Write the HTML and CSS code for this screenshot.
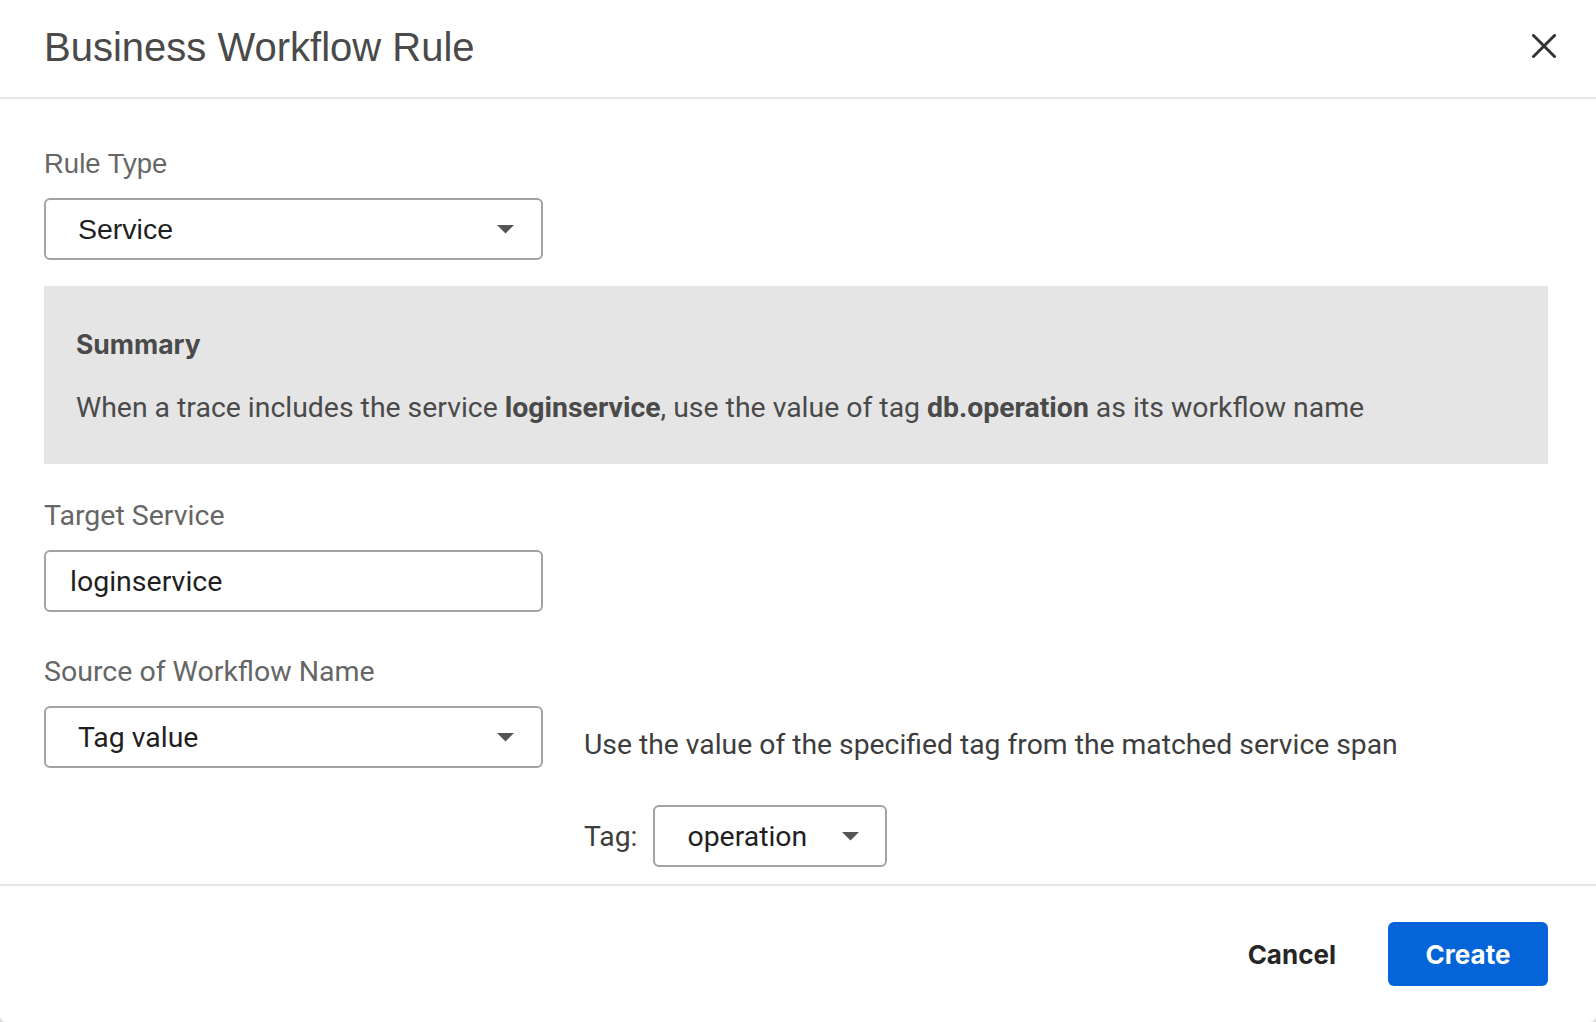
FILE: index.html
```html
<!DOCTYPE html>
<html lang="en">
<head>
<meta charset="utf-8">
<title>Business Workflow Rule</title>
<link rel="stylesheet" href="styles.css">
</head>
<body>
<div class="modal">
  <header class="modal-header">
    <h1 class="modal-title">Business Workflow Rule</h1>
    <button class="close-btn" aria-label="Close">
      <svg width="24" height="24" viewBox="0 0 24 24"><path d="M1.5 1.5 L22.5 22.5 M22.5 1.5 L1.5 22.5" stroke="#333" stroke-width="3" stroke-linecap="round" fill="none"/></svg>
    </button>
  </header>

  <main class="modal-body">
    <div class="field">
      <label class="field-label field-label-alt">Rule Type</label>
      <div class="select select-wide">
        <span class="select-value select-value-alt">Service</span>
        <svg class="caret" width="17" height="9" viewBox="0 0 17 9"><path d="M0 0 H17 L8.5 8.5 Z" fill="#555"/></svg>
      </div>
    </div>

    <section class="summary">
      <h2 class="summary-title">Summary</h2>
      <p class="summary-text">When a trace includes the service <b>loginservice</b>, use the value of tag <b>db.operation</b> as its workflow name</p>
    </section>

    <div class="field field-gap-target">
      <label class="field-label">Target Service</label>
      <div class="input">loginservice</div>
    </div>

    <div class="field field-gap-source">
      <label class="field-label">Source of Workflow Name</label>
      <div class="source-row">
        <div class="select select-wide">
          <span class="select-value">Tag value</span>
          <svg class="caret" width="17" height="9" viewBox="0 0 17 9"><path d="M0 0 H17 L8.5 8.5 Z" fill="#555"/></svg>
        </div>
        <div class="source-detail">
          <p class="helper">Use the value of the specified tag from the matched service span</p>
          <div class="tag-row">
            <span class="tag-label">Tag:</span>
            <div class="select select-tag">
              <span class="select-value">operation</span>
              <svg class="caret" width="17" height="9" viewBox="0 0 17 9"><path d="M0 0 H17 L8.5 8.5 Z" fill="#555"/></svg>
            </div>
          </div>
        </div>
      </div>
    </div>
  </main>

  <footer class="modal-footer">
    <button class="btn btn-cancel">Cancel</button>
    <button class="btn btn-primary">Create</button>
  </footer>
</div>
</body>
</html>
```
FILE: styles.css
```css
* { box-sizing: border-box; }

html, body {
  margin: 0;
  padding: 0;
  background: #dcdcdc;
}

body {
  font-family: Roboto, "Liberation Sans", Arial, sans-serif;
}

.modal {
  width: 1596px;
  min-height: 1022px;
  background: #fff;
  display: flex;
  flex-direction: column;
  border-radius: 0 0 6px 6px;
}

/* Header */
.modal-header {
  display: flex;
  justify-content: space-between;
  align-items: flex-start;
  padding: 23px 40px 26px 44px;
  border-bottom: 2px solid #e5e5e5;
}

.modal-title {
  margin: 0;
  font-family: "Liberation Sans", Arial, sans-serif;
  font-weight: 400;
  font-size: 40px;
  line-height: 48px;
  color: #4a4a4a;
}

.close-btn {
  margin-top: 11px;
  padding: 0;
  border: 0;
  background: none;
  width: 24px;
  height: 24px;
  display: flex;
}

/* Body */
.modal-body {
  padding: 48px 48px 17px 44px;
}

.field {
  display: flex;
  flex-direction: column;
  gap: 17px;
}

.field-gap-target { margin-top: 35px; }
.field-gap-source { margin-top: 43px; }

.field-label {
  font-size: 28.5px;
  line-height: 34px;
  color: #666;
}

.field-label-alt {
  font-family: "Liberation Sans", Arial, sans-serif;
  font-size: 27.5px;
}

.select {
  height: 62px;
  border: 2px solid #a3a3a3;
  border-radius: 6px;
  display: flex;
  align-items: center;
  justify-content: space-between;
  background: #fff;
}

.select-wide {
  width: 499px;
  padding: 0 27px 0 32px;
  flex: none;
}

.select-tag {
  width: 234px;
  padding: 0 26px 0 32px;
}

.select-value {
  font-size: 28.4px;
  color: #1f1f1f;
}

.select-value-alt {
  font-family: "Liberation Sans", Arial, sans-serif;
  font-size: 28.5px;
}

.caret { display: block; }

.input {
  width: 499px;
  height: 62px;
  border: 2px solid #a3a3a3;
  border-radius: 6px;
  display: flex;
  align-items: center;
  padding: 0 24px;
  font-size: 28.5px;
  color: #1f1f1f;
}

/* Summary */
.summary {
  margin-top: 26px;
  height: 178px;
  background: #e5e5e5;
  padding: 42px 32px 0 32px;
}

.summary-title {
  margin: 0;
  font-family: Inter, "Liberation Sans", sans-serif;
  font-weight: 700;
  font-size: 26.5px;
  line-height: 32px;
  color: #4a4a4a;
}

.summary-text {
  margin: 31px 0 0;
  font-size: 28.4px;
  line-height: 34px;
  color: #4a4a4a;
}

.summary-text b {
  font-weight: 700;
}

/* Source row */
.source-row {
  display: flex;
  align-items: flex-start;
  gap: 41px;
}

.source-detail {
  padding-top: 22px;
  display: flex;
  flex-direction: column;
  gap: 43px;
}

.helper {
  margin: 0;
  font-size: 28.3px;
  line-height: 34px;
  color: #3d3d3d;
}

.tag-row {
  display: flex;
  align-items: center;
  gap: 16px;
}

.tag-label {
  font-size: 28.3px;
  color: #3d3d3d;
}

/* Footer */
.modal-footer {
  flex: 1;
  border-top: 2px solid #e5e5e5;
  display: flex;
  justify-content: flex-end;
  align-items: flex-start;
  gap: 15px;
  padding: 36px 48px 0 0;
}

.btn {
  height: 64px;
  padding: 0 37px;
  border: 0;
  border-radius: 6px;
  font-family: Inter, "Liberation Sans", sans-serif;
  font-weight: 700;
  font-size: 26px;
  cursor: pointer;
}

.btn-cancel {
  background: transparent;
  color: #262626;
}

.btn-primary {
  background: #0565d8;
  color: #fff;
  width: 160px;
  padding: 0;
}
```
